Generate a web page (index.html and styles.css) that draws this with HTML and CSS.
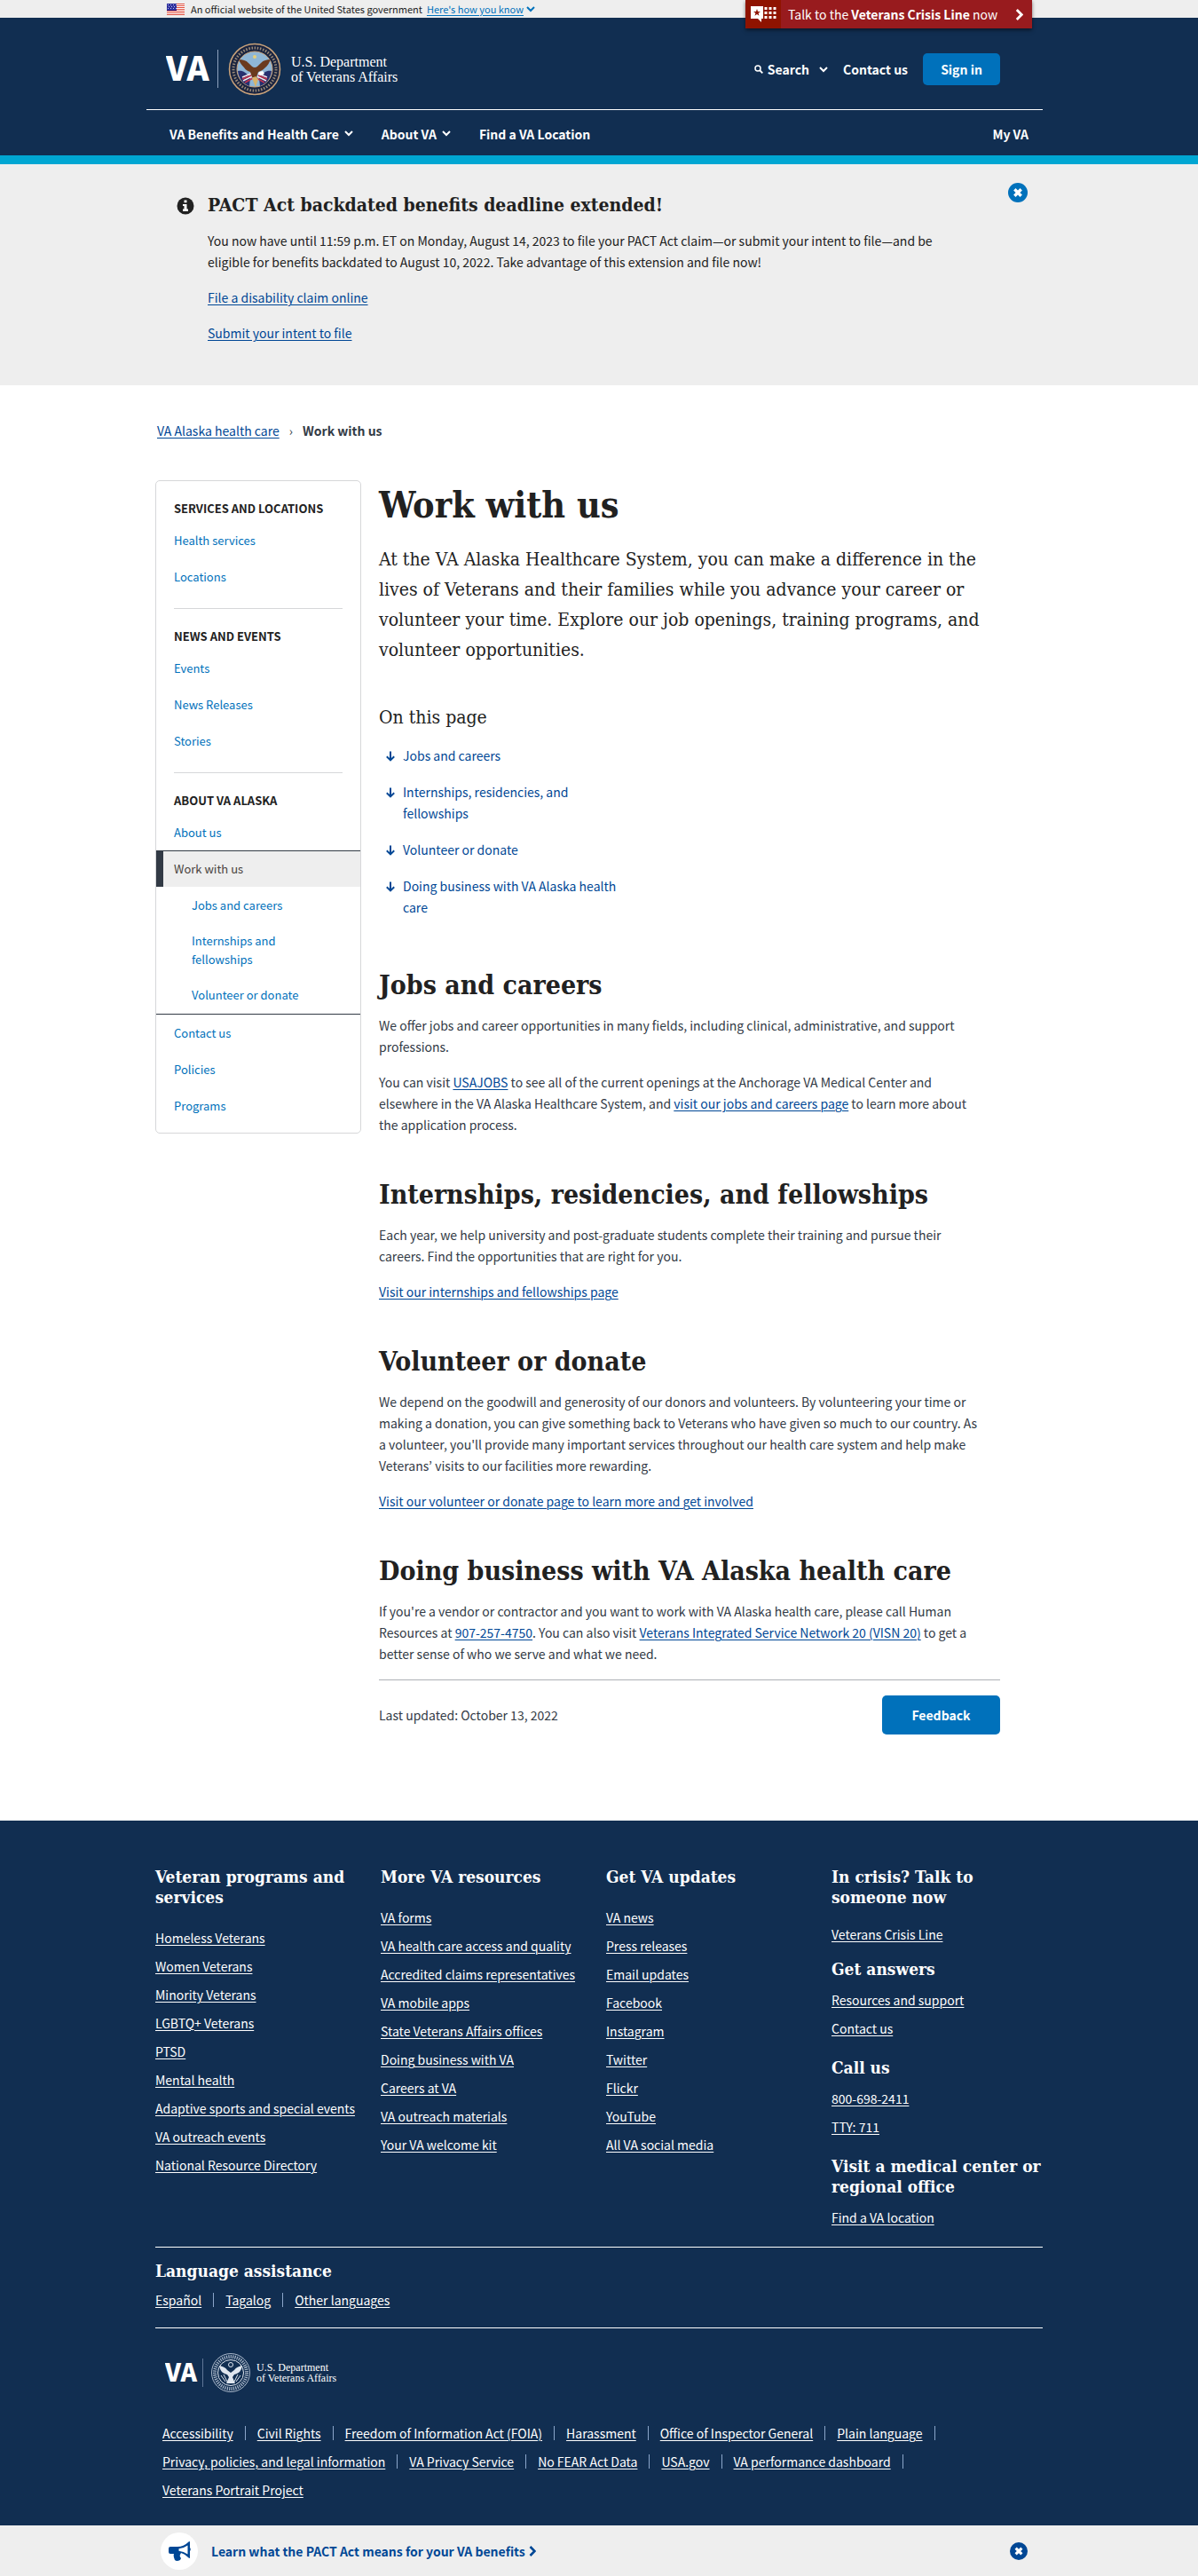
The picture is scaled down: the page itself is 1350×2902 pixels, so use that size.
FILE: index.html
```html
<!DOCTYPE html>
<html lang="en">
<head>
<meta charset="utf-8">
<meta name="viewport" content="width=device-width, initial-scale=1">
<title>Work with us | VA Alaska health care</title>
<link rel="stylesheet" href="styles.css">
</head>
<body>
<svg class="defs" width="0" height="0" aria-hidden="true">
  <symbol id="chev-down" viewBox="0 0 10 7"><path d="M1 1l4 4 4-4" fill="none" stroke="currentColor" stroke-width="2"/></symbol>
  <symbol id="chev-right" viewBox="0 0 8 12"><path d="M1.500 1l5 5-5 5" fill="none" stroke="currentColor" stroke-width="2.600"/></symbol>
  <symbol id="close" viewBox="0 0 22 22"><circle cx="11" cy="11" r="11" fill="currentColor"/><path d="M7.300 7.300l7.400 7.400M14.700 7.300l-7.400 7.400" stroke="#fff" stroke-width="3.400"/></symbol>
  <symbol id="down" viewBox="0 0 10 12"><path d="M5 0.500v10M0.800 6.200L5 10.400l4.200-4.200" fill="none" stroke="currentColor" stroke-width="2"/></symbol>
</svg>

<div class="gov">
  <div class="wrap gov-row">
    <svg class="flag" width="20" height="13" viewBox="0 0 20 13" aria-hidden="true"><path fill="#fff" d="M0 0h20v13H0z"/><path stroke="#e0503f" stroke-width="1" d="M0 .5h20M0 2.500h20M0 4.500h20M0 6.500h20M0 8.500h20M0 10.500h20M0 12.500h20"/><path fill="#2d2f9c" d="M0 0h11v8H0z"/><path stroke="#b9bdf0" stroke-width="1" stroke-dasharray="1 2" d="M1 1.500h10M2 3.500h9M1 5.500h10"/></svg>
    <span>An official website of the United States government</span>
    <button class="gov-btn" type="button"><span>Here's how you know</span><svg width="10" height="7"><use href="#chev-down"/></svg></button>
    <a class="crisis" href="#">
      <span class="crisis-icon"><svg width="29" height="18" viewBox="0 0 29 18"><path fill="#fff" d="M0 0h14v14h-2v4l-4-4H0z"/><path fill="#8f1300" d="M7 3l1 3h3L8.600 7.800l.9 3L7 9l-2.500 1.800.9-3L3 6h3z"/><path stroke="#fff" stroke-width="3" stroke-dasharray="3 2" d="M15.500 2.500H29M15.500 7.500H29M15.500 12.500H29"/></svg></span>
      <span class="crisis-text">Talk to the <b>Veterans Crisis Line</b> now</span>
      <svg width="9" height="13"><use href="#chev-right"/></svg>
    </a>
  </div>
</div>

<header class="header">
  <div class="wrap">
    <div class="header-top">
      <a class="logo" href="#" aria-label="VA home">
        <svg width="280" height="60" viewBox="0 0 280 60">
          <text class="logo-va" x="0" y="43" font-size="38">VA</text>
          <path d="M58.500 8v43" stroke="#8fa3bd"/>
          <g transform="translate(100 30)">
            <circle r="28.500" fill="#1a2440" stroke="#c9a27a" stroke-width="1.500"/>
            <circle r="24" fill="none" stroke="#9a8a78" stroke-width="3" stroke-dasharray="1.500 1.700"/>
            <circle r="20" fill="#8fb6d6" stroke="#c9a27a"/>
            <path fill="#26306f" d="M-19 2c5-1 9 1 14 8l-1 9C-14 16-18 10-19 2zM19 2c-5-1-9 1-14 8l1 9C14 16 18 10 19 2z"/>
            <path stroke="#f3e6ea" stroke-width="1.500" d="M-14 9l10-4M-13 13l10-5M14 9L4 5M13 13L3 8"/>
            <path stroke="#c2334c" stroke-width="1.500" d="M-14 11l10-4M-11 15l9-5M14 11L4 7M11 15L2 10"/>
            <path fill="#6b3a1e" d="M-18-11c5 0 8 1 11 4 3 3 5 5 7 5s4-2 7-5c3-3 6-4 11-4-2 4-3 7-7 10-3 3-5 3-7 4l-2 6h-5l-2-6c-3-1-5-2-7-5-3-3-5-6-6-9z"/>
            <path fill="#fff" d="M5 3l4-1 2 3-3 2-4-1z"/>
            <path fill="#d8b36a" d="M-3 10l4-2 3 3-3 9z"/>
            <circle cy="-14" r="2" fill="#e7cf7a"/>
          </g>
          <text class="logo-name" x="141" y="27" font-size="16">U.S. Department</text>
          <text class="logo-name" x="141" y="44" font-size="16">of Veterans Affairs</text>
        </svg>
      </a>
      <div class="tools">
        <button class="tool" type="button"><svg width="10" height="10" viewBox="0 0 10 10"><circle cx="4" cy="4" r="3" fill="none" stroke="#fff" stroke-width="1.500"/><path d="M6 6l3.300 3.300" stroke="#fff" stroke-width="1.800"/></svg><span>Search</span><svg class="tool-chev" width="10" height="7"><use href="#chev-down"/></svg></button>
        <a class="tool" href="#">Contact us</a>
        <button class="signin" type="button">Sign in</button>
      </div>
    </div>
    <nav class="nav" aria-label="Main">
      <button type="button">VA Benefits and Health Care<svg width="10" height="7"><use href="#chev-down"/></svg></button>
      <button type="button">About VA<svg width="10" height="7"><use href="#chev-down"/></svg></button>
      <a href="#">Find a VA Location</a>
      <a class="myva" href="#">My VA</a>
    </nav>
  </div>
</header>

<section class="notice">
  <div class="wrap notice-row">
    <svg class="info" width="20" height="20" viewBox="0 0 20 20" aria-hidden="true"><circle cx="10" cy="10" r="9.500" fill="#212121"/><path fill="#fff" d="M8.500 3.500h3v2.700h-3zM7 8h4.500v5.500H13V16H7v-2.500h1.500V10H7z"/></svg>
    <div class="notice-body">
      <h2>PACT Act backdated benefits deadline extended!</h2>
      <p>You now have until 11:59 p.m. ET on Monday, August 14, 2023 to file your PACT Act claim—or submit your intent to file—and be eligible for benefits backdated to August 10, 2022. Take advantage of this extension and file now!</p>
      <p><a href="#">File a disability claim online</a></p>
      <p><a href="#">Submit your intent to file</a></p>
    </div>
    <button class="close" type="button" aria-label="Close notice"><svg width="22" height="22"><use href="#close"/></svg></button>
  </div>
</section>

<nav class="wrap crumbs" aria-label="Breadcrumb"><a href="#">VA Alaska health care</a><span class="sep">›</span><b>Work with us</b></nav>

<div class="wrap page">
  <nav class="side" aria-label="Section">
    <div class="side-group">
      <h2>Services and locations</h2>
      <ul><li><a href="#">Health services</a></li><li><a href="#">Locations</a></li></ul>
    </div>
    <div class="side-group">
      <h2>News and events</h2>
      <ul><li><a href="#">Events</a></li><li><a href="#">News Releases</a></li><li><a href="#">Stories</a></li></ul>
    </div>
    <div class="side-group">
      <h2>About VA Alaska</h2>
      <ul>
        <li><a href="#">About us</a></li>
        <li class="current"><a href="#" aria-current="page">Work with us</a>
          <ul><li><a href="#">Jobs and careers</a></li><li><a href="#">Internships and fellowships</a></li><li><a href="#">Volunteer or donate</a></li></ul>
        </li>
        <li><a href="#">Contact us</a></li><li><a href="#">Policies</a></li><li><a href="#">Programs</a></li>
      </ul>
    </div>
  </nav>

  <main class="main">
    <h1>Work with us</h1>
    <p class="intro">At the VA Alaska Healthcare System, you can make a difference in the lives of Veterans and their families while you advance your career or volunteer your time. Explore our job openings, training programs, and volunteer opportunities.</p>
    <nav class="toc" aria-labelledby="toc-title">
      <h2 id="toc-title">On this page</h2>
      <ul>
        <li><a href="#jobs"><svg width="10" height="12"><use href="#down"/></svg><span>Jobs and careers</span></a></li>
        <li><a href="#intern"><svg width="10" height="12"><use href="#down"/></svg><span>Internships, residencies, and fellowships</span></a></li>
        <li><a href="#volunteer"><svg width="10" height="12"><use href="#down"/></svg><span>Volunteer or donate</span></a></li>
        <li><a href="#business"><svg width="10" height="12"><use href="#down"/></svg><span>Doing business with VA Alaska health care</span></a></li>
      </ul>
    </nav>
    <section class="topic">
      <h2 id="jobs">Jobs and careers</h2>
      <p>We offer jobs and career opportunities in many fields, including clinical, administrative, and support professions.</p>
      <p>You can visit <a href="#">USAJOBS</a> to see all of the current openings at the Anchorage VA Medical Center and elsewhere in the VA Alaska Healthcare System, and <a href="#">visit our jobs and careers page</a> to learn more about the application process.</p>
    </section>
    <section class="topic">
      <h2 id="intern">Internships, residencies, and fellowships</h2>
      <p>Each year, we help university and post-graduate students complete their training and pursue their careers. Find the opportunities that are right for you.</p>
      <p><a href="#">Visit our internships and fellowships page</a></p>
    </section>
    <section class="topic">
      <h2 id="volunteer">Volunteer or donate</h2>
      <p>We depend on the goodwill and generosity of our donors and volunteers. By volunteering your time or making a donation, you can give something back to Veterans who have given so much to our country. As a volunteer, you'll provide many important services throughout our health care system and help make Veterans’ visits to our facilities more rewarding.</p>
      <p><a href="#">Visit our volunteer or donate page to learn more and get involved</a></p>
    </section>
    <section class="topic">
      <h2 id="business">Doing business with VA Alaska health care</h2>
      <p>If you're a vendor or contractor and you want to work with VA Alaska health care, please call Human Resources at <a href="#">907-257-4750</a>. You can also visit <a href="#">Veterans Integrated Service Network 20 (VISN 20)</a> to get a better sense of who we serve and what we need.</p>
    </section>
    <div class="updated"><span>Last updated: October 13, 2022</span><button class="feedback" type="button">Feedback</button></div>
  </main>
</div>

<footer class="footer">
  <div class="wrap">
    <div class="cols">
      <div>
        <h2>Veteran programs and services</h2>
        <ul><li><a href="#">Homeless Veterans</a></li><li><a href="#">Women Veterans</a></li><li><a href="#">Minority Veterans</a></li><li><a href="#">LGBTQ+ Veterans</a></li><li><a href="#">PTSD</a></li><li><a href="#">Mental health</a></li><li><a href="#">Adaptive sports and special events</a></li><li><a href="#">VA outreach events</a></li><li><a href="#">National Resource Directory</a></li></ul>
      </div>
      <div>
        <h2>More VA resources</h2>
        <ul><li><a href="#">VA forms</a></li><li><a href="#">VA health care access and quality</a></li><li><a href="#">Accredited claims representatives</a></li><li><a href="#">VA mobile apps</a></li><li><a href="#">State Veterans Affairs offices</a></li><li><a href="#">Doing business with VA</a></li><li><a href="#">Careers at VA</a></li><li><a href="#">VA outreach materials</a></li><li><a href="#">Your VA welcome kit</a></li></ul>
      </div>
      <div>
        <h2>Get VA updates</h2>
        <ul><li><a href="#">VA news</a></li><li><a href="#">Press releases</a></li><li><a href="#">Email updates</a></li><li><a href="#">Facebook</a></li><li><a href="#">Instagram</a></li><li><a href="#">Twitter</a></li><li><a href="#">Flickr</a></li><li><a href="#">YouTube</a></li><li><a href="#">All VA social media</a></li></ul>
      </div>
      <div class="contact">
        <h2>In crisis? Talk to someone now</h2>
        <ul class="crisis-list"><li><a href="#">Veterans Crisis Line</a></li></ul>
        <h2>Get answers</h2>
        <ul><li><a href="#">Resources and support</a></li><li><a href="#">Contact us</a></li></ul>
        <h2>Call us</h2>
        <ul><li><a href="#">800-698-2411</a></li><li><a href="#">TTY: 711</a></li></ul>
        <h2>Visit a medical center or regional office</h2>
        <ul><li><a href="#">Find a VA location</a></li></ul>
      </div>
    </div>
    <div class="lang">
      <h2>Language assistance</h2>
      <ul class="bars"><li><a href="#">Español</a></li><li><a href="#">Tagalog</a></li><li><a href="#">Other languages</a></li></ul>
    </div>
    <div class="legal">
      <a class="logo" href="#" aria-label="VA home">
        <svg width="200" height="46" viewBox="0 0 200 46">
          <text class="logo-va" x="0" y="33" font-size="28">VA</text>
          <path d="M42.500 7v32" stroke="#5f7696"/>
          <g transform="translate(74 23)" fill="none" stroke="#dfe6ef">
            <circle r="21.500" stroke="#aab8ca"/>
            <circle r="18" stroke="#aab8ca" stroke-width="4" stroke-dasharray="1.200 1.200"/>
            <circle r="14.500"/>
            <path stroke="none" fill="#dfe6ef" d="M-13-8c4 1 7 2 9 5l4 3 4-3c2-3 5-4 9-5-1 6-4 9-9 10l-2 3 3 7H-5l3-7-2-3c-5-1-8-4-9-10z"/>
            <circle cy="-9" r="2.500"/>
            <path d="M-11 3l5 7M11 3l-5 7M-8 2l4 8M8 2l-4 8"/>
          </g>
          <text class="logo-name" x="103" y="21" font-size="12">U.S. Department</text>
          <text class="logo-name" x="103" y="33" font-size="12">of Veterans Affairs</text>
        </svg>
      </a>
      <ul class="bars"><li><a href="#">Accessibility</a></li><li><a href="#">Civil Rights</a></li><li><a href="#">Freedom of Information Act (FOIA)</a></li><li><a href="#">Harassment</a></li><li><a href="#">Office of Inspector General</a></li><li><a href="#">Plain language</a></li><li><a href="#">Privacy, policies, and legal information</a></li><li><a href="#">VA Privacy Service</a></li><li><a href="#">No FEAR Act Data</a></li><li><a href="#">USA.gov</a></li><li><a href="#">VA performance dashboard</a></li><li><a href="#">Veterans Portrait Project</a></li></ul>
    </div>
  </div>
</footer>

<aside class="promo">
  <div class="wrap promo-row">
    <span class="promo-icon"><svg width="25" height="23" viewBox="0 0 25 23"><path fill="#004795" d="M0 8q0-2 2-2h8Q17 6 22 1q2-2 2 0v6q1.500 2 0 4v7q0 2-2 0-4-4-8-5l-1 2q-1 2 1 4l-1 2q-4 2-6 0-2-4-1-7H2q-2 0-2-2z"/><path fill="#fff" d="M11.500 8.300Q17 7.800 21.500 4.500v10Q17 11.200 11.500 10.800z"/></svg></span>
    <a href="#">Learn what the PACT Act means for your VA benefits<svg width="8" height="12"><use href="#chev-right"/></svg></a>
    <button class="close" type="button" aria-label="Close promotion"><svg width="20" height="20" viewBox="0 0 22 22"><use href="#close"/></svg></button>
  </div>
</aside>
</body>
</html>
```
FILE: styles.css
```css
* { box-sizing: border-box; }
body {
  margin: 0;
  background: #fff;
  color: #323a45;
  font-family: "Noto Sans CJK KR", "Noto Sans", sans-serif;
  font-size: 14px;
  line-height: 24px;
}
h1, h2, p, ul { margin: 0; padding: 0; }
ul { list-style: none; }
button { font: inherit; color: inherit; background: none; border: 0; padding: 0; cursor: pointer; }
a { color: #004795; text-underline-offset: 2px; text-decoration-thickness: 1px; }
svg { display: block; flex: none; }
h1, h2 { font-family: "DejaVu Serif Condensed", "DejaVu Serif", serif; font-weight: 700; color: #212121; }
.defs { position: absolute; }
.wrap { max-width: 1000px; margin: 0 auto; }

.gov { background: #eee; font-size: 11px; line-height: 20px; color: #212121; }
.gov-row { position: relative; display: flex; align-items: center; height: 20px; padding-left: 13px; }
.flag { margin-right: 7px; }
.gov-btn { display: flex; align-items: center; gap: 3px; margin-left: 5px; color: #0071bb; }
.gov-btn span { text-decoration: underline; text-underline-offset: 2px; }
.crisis {
  position: absolute; top: 0; right: 12px;
  display: flex; align-items: center;
  width: 323px; height: 32px; padding-right: 10px;
  background: #981b1e; color: #fff; font-size: 14px; text-decoration: none;
  box-shadow: 0 2px 4px rgba(0, 0, 0, .5);
}
.crisis-icon { display: flex; align-items: center; align-self: stretch; width: 40px; padding-left: 6px; background: #8f1300; }
.crisis-text { flex: 1; padding-left: 8px; }

.header { background: #112e51; border-bottom: 10px solid #00a6d2; color: #fff; font-weight: 700; }
.header a { color: #fff; text-decoration: none; }
.header-top {
  display: flex; justify-content: space-between; align-items: center;
  height: 104px; margin-left: -10px; padding: 13px 48px 0 22px;
  border-bottom: 1px solid #fff;
}
.logo { display: block; }
.logo-va { font-weight: 900; fill: #fff; }
.logo-name { font-family: "Liberation Serif", serif; font-weight: 400; fill: #fff; }
.tools { display: flex; align-items: center; }
.tool { display: flex; align-items: center; gap: 5px; margin-right: 17px; }
.tool-chev { margin-left: 6px; }
.signin { width: 87px; height: 36px; border-radius: 5px; background: #0071bb; font-weight: 700; }
.nav { display: flex; align-items: center; gap: 32px; height: 51px; padding: 2px 16px 0; }
.nav button { display: flex; align-items: center; gap: 6px; font-weight: 700; }
.myva { margin-left: auto; }

.notice { background: #eee; }
.notice-row { display: flex; padding: 34px 17px 47px 24px; }
.info { margin: 3px 15px 0 0; }
.notice-body { flex: 1; max-width: 860px; }
.notice h2 { font-size: 21px; line-height: 24px; }
.notice p { margin-top: 16px; color: #212121; }
.close { align-self: flex-start; margin-left: auto; color: #0071bb; }
.notice .close { margin-top: -13px; }

.crumbs { display: flex; padding: 39px 2px 0; }
.sep { margin: 0 11px; }

.page { display: grid; grid-template-columns: 232px minmax(0, 700px); column-gap: 20px; padding: 44px 0 97px; }
.side { align-self: start; border: 1px solid #d6d7d9; border-radius: 5px; padding: 20px 0 10px; font-size: 13px; line-height: 21px; }
.side-group + .side-group { padding-top: 15px; }
.side-group + .side-group::before { content: ""; display: block; margin: 0 20px 20px; border-top: 1px solid #d6d7d9; }
.side h2 { padding: 0 20px; margin-bottom: 4px; font-family: inherit; font-size: 13px; line-height: 22px; text-transform: uppercase; }
.side a { display: block; padding: 10px 20px; color: #0071bb; text-decoration: none; }
.current { border-top: 1px solid #323a45; border-bottom: 1px solid #323a45; }
.side .current > a { border-left: 8px solid #323a45; padding: 9px 20px 10px 12px; background: #eee; color: #494440; }
.current ul { padding-bottom: 2px; }
.side .current ul a { padding: 10px 60px 9px 40px; }

h1 { font-size: 41px; line-height: 50px; margin-top: 3px; }
.intro { margin-top: 19px; font-family: "DejaVu Serif Condensed", "DejaVu Serif", serif; font-size: 21px; line-height: 34px; color: #212121; }
.toc h2 { margin-top: 45px; font-size: 21px; line-height: 28px; font-weight: 400; }
.toc ul { max-width: 284px; padding: 17px 0 9px 8px; }
.toc li + li { margin-top: 17px; }
.toc a { display: flex; text-decoration: none; }
.toc svg { margin: 7px 9px 0 0; }
.topic { margin-top: 49px; }
.topic h2 { font-size: 30px; line-height: 36px; }
.topic p { max-width: 683px; margin-top: 16px; }
.topic h2 + p { margin-top: 15px; }
.updated { display: flex; justify-content: space-between; align-items: center; margin-top: 17px; padding-top: 17px; border-top: 1px solid #aeb0b5; }
.feedback { width: 133px; height: 44px; border-radius: 5px; background: #0071bb; color: #fff; font-weight: 700; }

.footer { background: #112e51; color: #fff; padding: 52px 0 28px; }
.footer a { color: #fff; }
.footer h2 { font-size: 19px; line-height: 23px; color: #fff; }
.cols { display: grid; grid-template-columns: repeat(4, minmax(0, 1fr)); column-gap: 16px; padding-bottom: 21px; }
.cols ul { padding-top: 22px; }
.cols li + li { margin-top: 8px; }
.contact ul { padding: 11px 0 21px; }
.contact .crisis-list { padding: 18px 0 16px; }
.contact ul:last-child { padding-bottom: 0; }
.lang { padding: 15px 0 19px; border-top: 1px solid #fff; border-bottom: 1px solid #fff; }
.bars { display: flex; flex-wrap: wrap; row-gap: 8px; }
.lang .bars { padding-top: 9px; }
.bars li { display: flex; align-items: center; }
.bars li:not(:last-child)::after { content: ""; height: 16px; margin: 0 13px; border-left: 1px solid #8ba6ca; }
.legal { padding: 27px 8px 0; }
.legal .logo { width: 200px; margin-left: 3px; padding-bottom: 33px; }

.promo { background: #eee; }
.promo-row { display: flex; align-items: center; height: 58px; padding: 0 17px 0 6px; }
.promo-icon { display: flex; align-items: center; justify-content: center; width: 42px; height: 42px; margin-right: 15px; border-radius: 50%; background: #fff; }
.promo a { display: flex; align-items: center; gap: 4px; color: #004795; font-weight: 700; text-decoration: none; }
.promo .close { align-self: center; color: #004795; }
```
